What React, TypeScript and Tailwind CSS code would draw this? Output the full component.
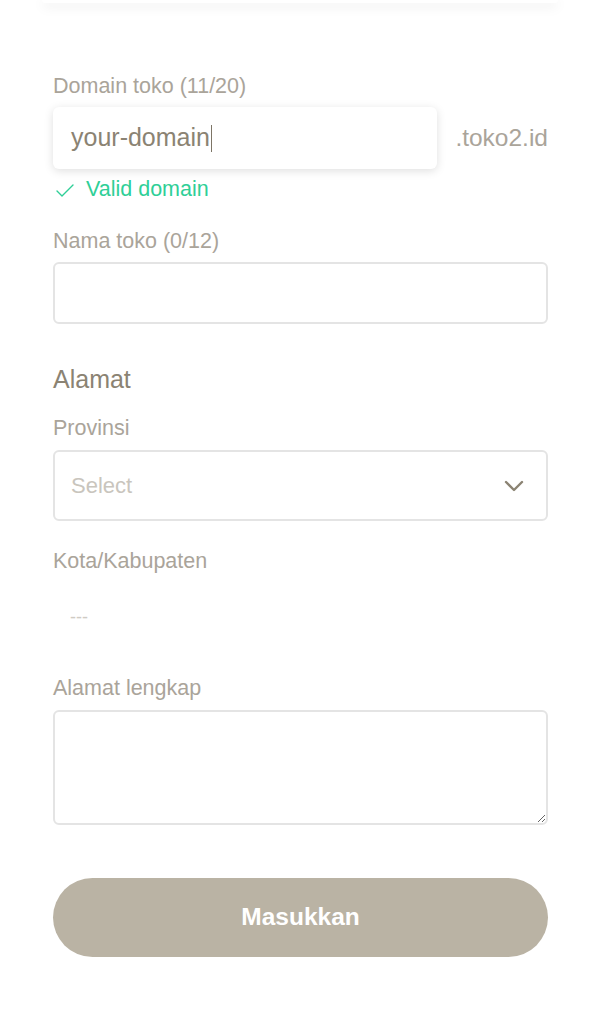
import { Check, ChevronDown } from 'lucide-react';

const labelCls = 'text-[21.5px] leading-[24px] text-[#aaa49a]';

const App: React.FC = () => {
    return (
        <div
            className="min-h-[1024px] bg-white"
            style={{ fontFamily: '"Liberation Sans", Arial, sans-serif' }}
        >
            {/* bottom edge of the card above */}
            <div className="mx-[42px] h-[3px] rounded-b-2xl bg-white shadow-[0_3px_12px_rgba(0,0,0,0.13)]" />

            <div className="flex flex-col px-[52px] pl-[53px] pt-[71px] pb-10">
                <label className={labelCls}>Domain toko (11/20)</label>
                <div className="mt-[9px] flex items-center gap-[18px]">
                    <div className="flex h-[62px] flex-1 items-center rounded-md bg-white px-[18px] shadow-[0_2px_10px_rgba(0,0,0,0.13)]">
                        <span className="text-[25px] text-[#8b8373]">your-domain</span>
                        <span className="ml-px h-[27px] w-px bg-[#7d7566]" />
                    </div>
                    <span className="text-[24.5px] text-[#aaa49a]">.toko2.id</span>
                </div>
                <div className="mt-[8px] flex h-[24px] items-center gap-[9px] text-[21.5px] leading-[24px] text-[#2fcf97]">
                    <Check className="h-[24px] w-[24px] shrink-0 translate-y-[2px]" strokeWidth={1.4} />
                    <span>Valid domain</span>
                </div>

                <label className={`${labelCls} mt-[28px]`}>Nama toko (0/12)</label>
                <input
                    className="mt-[9px] h-[62px] rounded-md border-2 border-[#e4e4e4] px-[18px] text-[21px] outline-none"
                    defaultValue=""
                />

                <h2 className="mt-[40px] text-[25px] leading-[30px] text-[#8b8373]">Alamat</h2>

                <label className={`${labelCls} mt-[22px]`}>Provinsi</label>
                <div className="mt-[10px] flex h-[71px] items-center justify-between rounded-md border-2 border-[#e4e4e4] pl-[16px] pr-[16px]">
                    <span className="text-[22px] text-[#c9c5bd]">Select</span>
                    <ChevronDown className="h-[32px] w-[32px] text-[#8b8373]" strokeWidth={1.8} />
                </div>

                <label className={`${labelCls} mt-[28px]`}>Kota/Kabupaten</label>
                <div className="mt-[9px] flex h-[70px] items-center pl-[17px]">
                    <span className="text-[18px] text-[#cfcbc4]">---</span>
                </div>

                <label className={`${labelCls} mt-[24px]`}>Alamat lengkap</label>
                <textarea className="mt-[10px] h-[115px] rounded-md border-2 border-[#e4e4e4] px-[18px] py-3 text-[21px] outline-none" />

                <button className="mt-[53px] h-[79px] rounded-full bg-[#bab3a4] text-[24.5px] font-bold text-white">
                    Masukkan
                </button>
            </div>
        </div>
    );
};

export default App;
